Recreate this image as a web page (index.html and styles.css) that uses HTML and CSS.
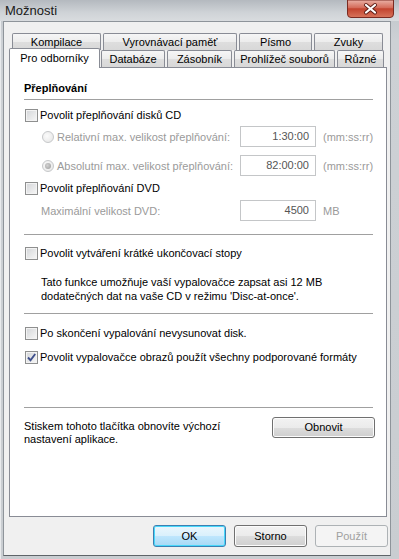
FILE: index.html
```html
<!DOCTYPE html>
<html lang="cs">
<head>
<meta charset="utf-8">
<title>Možnosti</title>
<link rel="stylesheet" href="styles.css">
</head>
<body>
<div class="window">
  <div class="titlebar">
    <span class="title">Možnosti</span>
    <div class="close">
      <svg width="47" height="18" viewBox="0 0 47 18">
        <defs>
          <linearGradient id="cg" x1="0" y1="0" x2="0" y2="1">
            <stop offset="0" stop-color="#eab1a6"/>
            <stop offset="0.45" stop-color="#d46a58"/>
            <stop offset="0.5" stop-color="#c2432e"/>
            <stop offset="1" stop-color="#d8755c"/>
          </linearGradient>
        </defs>
        <path d="M0.5 0 H46.5 V14 Q46.5 17.5 43 17.5 H4 Q0.5 17.5 0.5 14 Z" fill="url(#cg)" stroke="#7a2b22" stroke-width="1"/>
        <path d="M19 5 L28 12.5 M28 5 L19 12.5" stroke="#5b1d16" stroke-width="4" stroke-linecap="round"/>
        <path d="M19 5 L28 12.5 M28 5 L19 12.5" stroke="#ffffff" stroke-width="2.2" stroke-linecap="round"/>
      </svg>
    </div>
  </div>
  <div class="frame-body">
    <div class="client">
      <div class="tabrow row1">
        <div class="tab w89">Kompilace</div>
        <div class="tab w134">Vyrovnávací paměť</div>
        <div class="tab w73">Písmo</div>
        <div class="tab w69">Zvuky</div>
      </div>
      <div class="tabrow row2">
        <div class="tab selected w91">Pro odborníky</div>
        <div class="tab w64 g1">Databáze</div>
        <div class="tab w65">Zásobník</div>
        <div class="tab w101">Prohlížeč souborů</div>
        <div class="tab w47">Různé</div>
      </div>
      <div class="panel">
        <div class="heading">Přeplňování</div>
        <div class="sep mt2"></div>
        <div class="check-row mt5"><span class="cb"></span><span class="lbl">Povolit přeplňování disků CD</span></div>
        <div class="field-row mt1">
          <div class="radio-label"><span class="rb"></span><span class="lbl dis">Relativní max. velikost přeplňování:</span></div>
          <div class="input">1:30:00</div>
          <span class="unit">(mm:ss:rr)</span>
        </div>
        <div class="field-row mt8">
          <div class="radio-label"><span class="rb on"></span><span class="lbl dis">Absolutní max. velikost přeplňování:</span></div>
          <div class="input">82:00:00</div>
          <span class="unit">(mm:ss:rr)</span>
        </div>
        <div class="check-row mt2"><span class="cb"></span><span class="lbl">Povolit přeplňování DVD</span></div>
        <div class="field-row mt2">
          <div class="plain-label dis">Maximální velikost DVD:</div>
          <div class="input">4500</div>
          <span class="unit">MB</span>
        </div>
        <div class="sep mt13"></div>
        <div class="check-row mt8"><span class="cb"></span><span class="lbl">Povolit vytváření krátké ukončovací stopy</span></div>
        <p class="note mt12">Tato funkce umožňuje vaší vypalovačce zapsat asi 12 MB<br>dodatečných dat na vaše CD v režimu 'Disc-at-once'.</p>
        <div class="sep mt10"></div>
        <div class="check-row mt9"><span class="cb"></span><span class="lbl">Po skončení vypalování nevysunovat disk.</span></div>
        <div class="check-row mt4"><span class="cb checked"><svg width="11" height="11" viewBox="0 0 11 11"><path d="M2 5.5 L4.5 8.2 L9.2 2" fill="none" stroke="#3e4f8c" stroke-width="1.9"/></svg></span><span class="lbl">Povolit vypalovačce obrazů použít všechny podporované formáty</span></div>
        <div class="sep mt40"></div>
        <div class="reset-row mt9">
          <div class="reset-text">Stiskem tohoto tlačítka obnovíte výchozí<br>nastavení aplikace.</div>
          <div class="btn reset">Obnovit</div>
        </div>
      </div>
      <div class="buttons">
        <div class="btn default">OK</div>
        <div class="btn">Storno</div>
        <div class="btn disabled">Použít</div>
      </div>
    </div>
  </div>
</div>
</body>
</html>
```
FILE: styles.css
```css
* { box-sizing: border-box; }
html, body { margin: 0; padding: 0; }
body {
  width: 399px;
  height: 559px;
  overflow: hidden;
  font-family: "Liberation Sans", Arial, sans-serif;
  font-size: 11px;
  color: #000;
  background: #c4c8cc;
}
.window {
  width: 399px;
  height: 559px;
  display: flex;
  flex-direction: column;
  background: linear-gradient(#bfc4c9, #cdd1d5 40px, #c9cdd1);
}
.titlebar {
  height: 21px;
  display: flex;
  align-items: flex-start;
  background: linear-gradient(#b4b9bf, #cfd3d7 60%, #d9dcdf);
}
.title {
  font-family: "Liberation Sans", Arial, sans-serif;
  font-size: 13px;
  line-height: 22px;
  margin-left: 5px;
  color: #1a1a1a;
}
.close {
  margin-left: auto;
  margin-right: 5px;
  height: 18px;
  width: 47px;
}
.close svg { display: block; }
.frame-body {
  padding: 0 8px 3px 3px;
  box-shadow: inset 1px 0 0 #e8eaec;
}
.client {
  width: 388px;
  height: 535px;
  background: #f0f0f0;
  border: 1px solid #8e949a;
  border-bottom-color: #5f6469;
  padding: 11px 0 0 5px;
}
.tabrow { display: flex; }
.row1 { margin-left: 3px; gap: 2px; height: 17px; }
.row2 { height: 17px; align-items: flex-end; gap: 2px; position: relative; z-index: 2; }
.tab {
  height: 17px;
  border: 1px solid #898c95;
  border-bottom: none;
  border-radius: 2px 2px 0 0;
  background: linear-gradient(#f6f6f6, #ececec 50%, #dedede 51%, #d8d8d8);
  text-align: center;
  line-height: 16px;
  white-space: nowrap;
}
.tab.selected {
  height: 20px;
  margin-bottom: -1px;
  background: #fff;
  line-height: 18px;
}
.g1 { margin-left: -1px; }
.w89 { width: 89px; }
.w134 { width: 134px; }
.w73 { width: 73px; }
.w69 { width: 69px; }
.w91 { width: 91px; }
.w64 { width: 64px; }
.w65 { width: 65px; }
.w101 { width: 101px; }
.w47 { width: 47px; }
.panel {
  width: 378px;
  height: 450px;
  background: #fff;
  border: 1px solid #898c95;
  padding: 11px 13px 0 14px;
  display: flex;
  flex-direction: column;
}
.heading {
  font-weight: bold;
  height: 18px;
  line-height: 18px;
}
.sep { height: 1px; background: #a0a0a0; flex: none; }
.mt1 { margin-top: 1px; }
.mt2 { margin-top: 2px; }
.mt4 { margin-top: 4px; }
.mt5 { margin-top: 5px; }
.mt8 { margin-top: 8px; }
.mt9 { margin-top: 9px; }
.mt10 { margin-top: 10px; }
.mt12 { margin-top: 12px; }
.mt13 { margin-top: 13px; }
.mt40 { margin-top: 40px; }
.check-row {
  height: 20px;
  display: flex;
  align-items: center;
  flex: none;
}
.cb {
  width: 13px;
  height: 13px;
  margin-left: 1px;
  border: 1px solid #8e8f8f;
  background: linear-gradient(135deg, #d3d5d8, #f7f7f7);
  box-shadow: inset 0 0 0 1px #f3f3f3;
  display: flex;
  align-items: center;
  justify-content: center;
  flex: none;
}
.cb svg { display: block; }
.lbl { margin-left: 2px; white-space: nowrap; }
.dis { color: #9a9a9a; }
.field-row {
  height: 21px;
  display: grid;
  grid-template-columns: 216px 76px auto;
  align-items: center;
  flex: none;
}
.radio-label { display: flex; align-items: center; }
.rb {
  width: 12px;
  height: 12px;
  margin-left: 18px;
  border-radius: 50%;
  border: 1px solid #c6c8ca;
  background: radial-gradient(circle at 40% 40%, #fbfbfb, #e4e4e4);
  display: flex;
  align-items: center;
  justify-content: center;
  flex: none;
}
.rb.on::after {
  content: "";
  width: 6px;
  height: 6px;
  border-radius: 50%;
  background: radial-gradient(circle at 40% 40%, #d2d2d2, #9a9a9a);
}
.radio-label .lbl { margin-left: 3px; }
.plain-label { margin-left: 17px; }
.input {
  height: 21px;
  border: 1px solid #c4c6c8;
  background: #fff;
  text-align: right;
  padding-right: 6px;
  line-height: 19px;
  color: #555;
}
.unit { margin-left: 7px; color: #9a9a9a; }
.note {
  margin-bottom: 0;
  margin-left: 17px;
  line-height: 14px;
  flex: none;
}
.note.mt12 { margin-top: 12px; }
.reset-row {
  display: flex;
  justify-content: space-between;
  align-items: flex-start;
  margin-right: -2px;
}
.reset-text { margin-top: 3px; line-height: 13px; }
.btn {
  width: 73px;
  height: 22px;
  border: 1px solid #707070;
  border-radius: 3px;
  background: linear-gradient(#f2f2f2, #ebebeb 50%, #dddddd 51%, #cfcfcf);
  box-shadow: inset 0 0 0 1px #fcfcfc;
  text-align: center;
  line-height: 20px;
  flex: none;
}
.btn.reset { width: 103px; height: 21px; line-height: 19px; }
.btn.default {
  border-color: #3c7fb1;
  box-shadow: inset 0 0 0 1px #48d8fb;
  background: linear-gradient(#eaf6fd, #d9f0fc 50%, #bee6fd 51%, #a7d9f5);
}
.btn.disabled {
  border-color: #adb2b5;
  background: #f4f4f4;
  box-shadow: none;
  color: #a0a0a0;
}
.buttons {
  display: flex;
  justify-content: flex-end;
  gap: 8px;
  margin-top: 8px;
  padding-right: 2px;
}
```
